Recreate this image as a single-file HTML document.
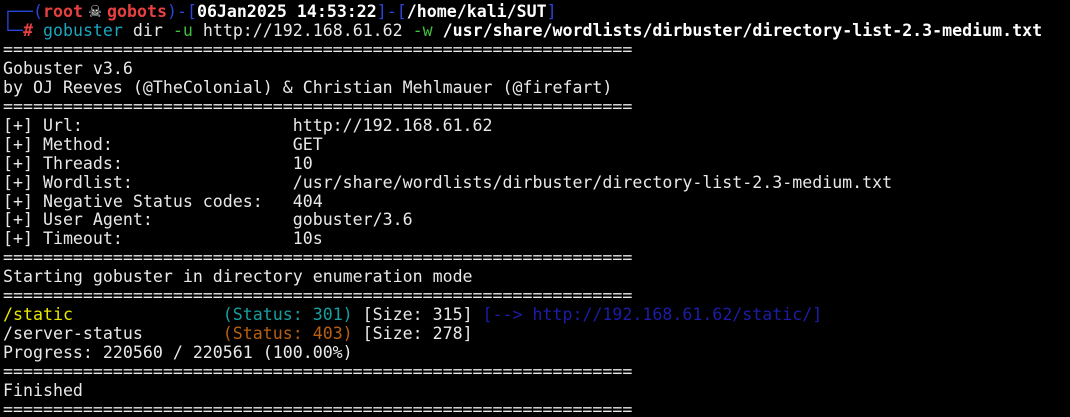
<!DOCTYPE html>
<html><head><meta charset="utf-8"><style>
html,body{margin:0;padding:0;background:#000;width:1070px;height:417px;overflow:hidden}
pre{margin:0;padding:3px 0 0 3px;font-family:"DejaVu Sans Mono","Liberation Mono",monospace;font-size:16.6px;line-height:18.95px;color:#e8e8e8;white-space:pre}
.b{color:#2a45d8}.r{color:#e84040;font-weight:bold}.w{color:#fff;font-weight:bold}
.c{color:#1aa6bd}.g{color:#3fbf3f}.y{color:#e8e800}.t{color:#15a0a0}.o{color:#b8600f}.d{color:#1c1ca8}
.sk{display:inline-block;width:2ch;text-align:center;color:#eee;font-size:20px;line-height:10px}
</style></head><body><pre><span class="b">┌──(</span><span class="r">root</span><span class="sk">☠</span><span class="r">gobots</span><span class="b">)-[</span><span class="w">06Jan2025 14:53:22</span><span class="b">]-[</span><span class="w">/home/kali/SUT</span><span class="b">]</span>
<span class="b">└─</span><span class="r">#</span> <span class="c">gobuster</span> dir <span class="g">-u</span> http://192.168.61.62 <span class="g">-w</span> <span class="w">/usr/share/wordlists/dirbuster/directory-list-2.3-medium.txt</span>
===============================================================
Gobuster v3.6
by OJ Reeves (@TheColonial) &amp; Christian Mehlmauer (@firefart)
===============================================================
[+] Url:                     http://192.168.61.62
[+] Method:                  GET
[+] Threads:                 10
[+] Wordlist:                /usr/share/wordlists/dirbuster/directory-list-2.3-medium.txt
[+] Negative Status codes:   404
[+] User Agent:              gobuster/3.6
[+] Timeout:                 10s
===============================================================
Starting gobuster in directory enumeration mode
===============================================================
<span class="y">/static</span>               <span class="t">(Status: 301)</span> [Size: 315] <span class="d">[--&gt; http://192.168.61.62/static/]</span>
/server-status        <span class="o">(Status: 403)</span> [Size: 278]
Progress: 220560 / 220561 (100.00%)
===============================================================
Finished
===============================================================</pre></body></html>
